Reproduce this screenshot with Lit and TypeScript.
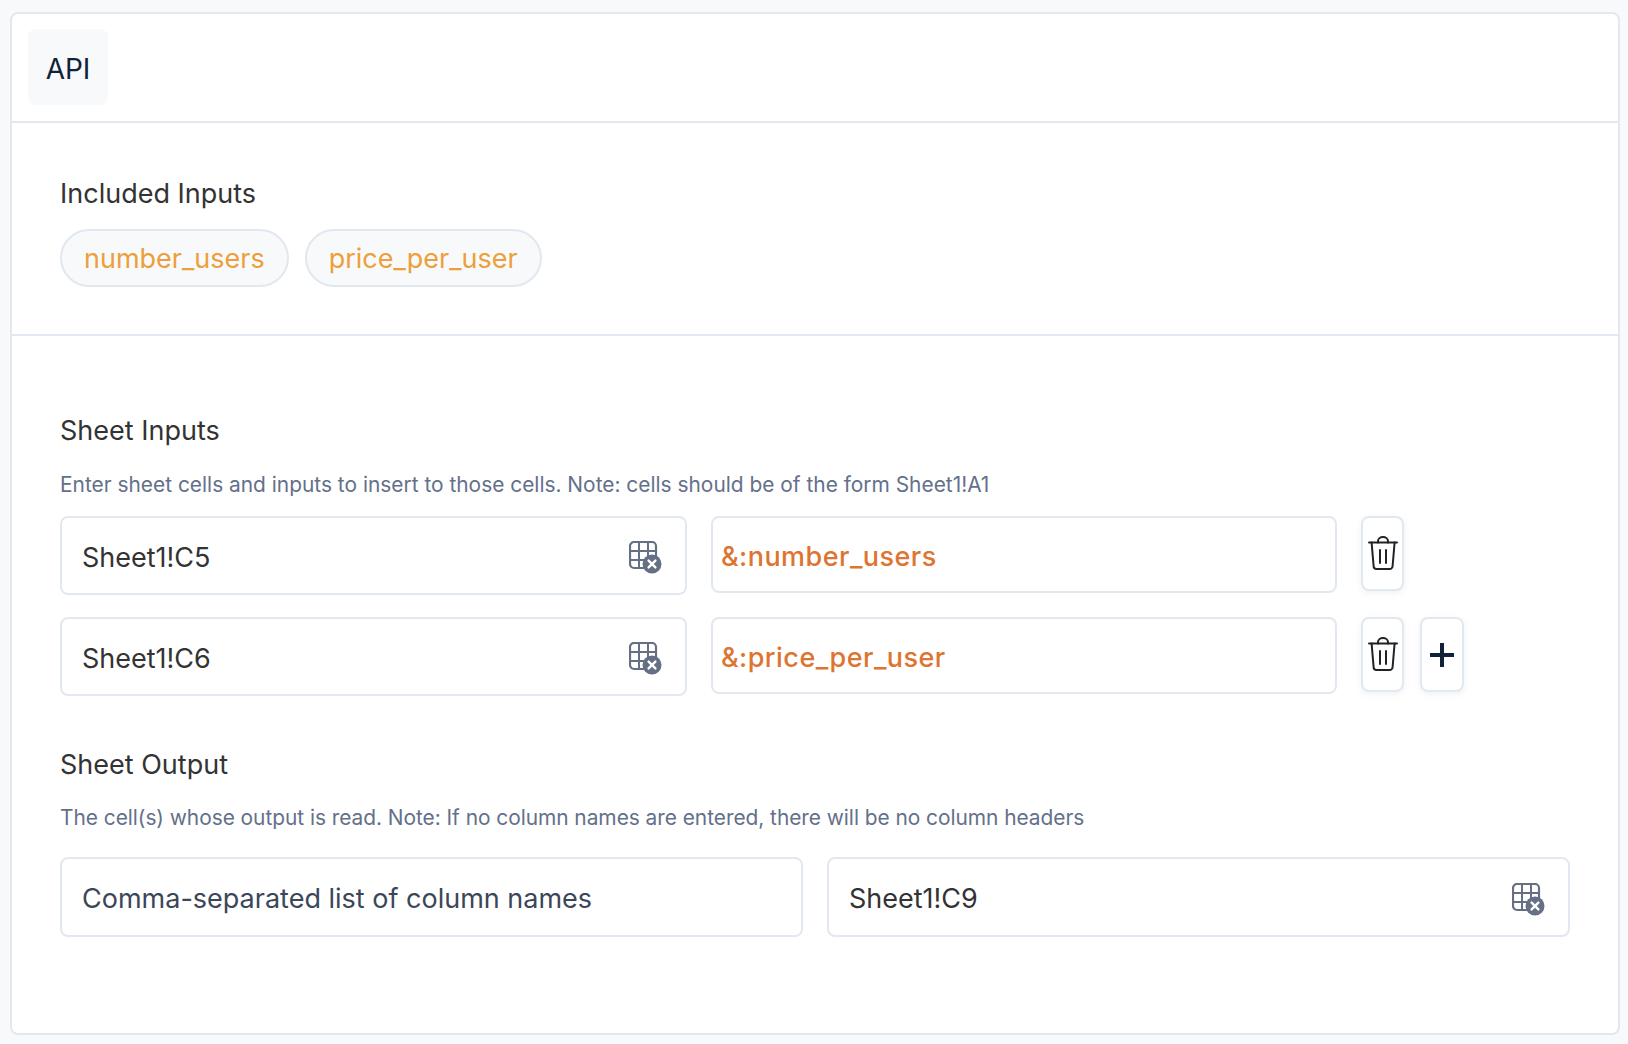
import { LitElement, html, css } from "lit";
import { customElement } from "lit/decorators.js";

const tableIcon = html`<svg class="tbl" width="33" height="33" viewBox="0 0 33 33" fill="none">
  <rect x="1" y="1" width="26" height="26" rx="4" stroke="#667085" stroke-width="2.2"/>
  <path d="M1 10h26M1 19h26M10 1v26M19 1v26" stroke="#667085" stroke-width="2"/>
  <circle cx="23" cy="23" r="9.5" fill="#667085"/>
  <path d="M19.6 19.6l6.8 6.8M26.4 19.6l-6.8 6.8" stroke="#fff" stroke-width="2.4" stroke-linecap="round"/>
</svg>`;

const trash = html`<svg class="bin" width="30" height="34" viewBox="0 0 30 34" fill="none" stroke="#222" stroke-width="2" stroke-linecap="round" stroke-linejoin="round">
  <path d="M1 6.5h28"/>
  <path d="M3.6 6.5l2 23.5a3 3 0 0 0 3 3h13a3 3 0 0 0 3-3l2-23.5"/>
  <path d="M10 6.5V5a5 4 0 0 1 10 0v1.5"/>
  <path d="M12 14v13M18 14v13"/>
</svg>`;

const plus = html`<svg width="24" height="24" viewBox="0 0 24 24" fill="none" stroke="#0f2239" stroke-width="4"><path d="M12 0v24M0 12h24"/></svg>`;

@customElement("app-root")
export class AppRoot extends LitElement {
  static styles = css`
    :host {
      display: block;
      box-sizing: border-box;
      min-height: 100vh;
      padding: 12px 8px 10px 10px;
      background: #f7f9fb;
      font-family: "Inter", "Liberation Sans", sans-serif;
      color: #333;
    }
    * { box-sizing: border-box; }
    .card {
      background: #fff;
      border: 2px solid #e2e8f0;
      border-radius: 8px;
      height: 1023px;
    }
    .tabs {
      padding: 15px 16px 16px;
      border-bottom: 2px solid #e2e8f0;
    }
    .tab {
      width: 80px;
      height: 76px;
      background: #f7f9fb;
      border-radius: 8px;
      display: flex;
      align-items: center;
      justify-content: center;
      font-size: 28px;
      color: #0f2239;
      padding-top: 4px;
    }
    .included {
      height: 213px;
      padding: 55px 47px 0 48px;
      border-bottom: 2px solid #e2e8f0;
    }
    .label { font-size: 27px; line-height: 32px; color: #333; }
    .chips { display: flex; gap: 16px; margin-top: 19px; }
    .chip {
      height: 58px;
      padding: 0 22px;
      border-radius: 29px;
      border: 2px solid #e2e8f0;
      background: #f7f9fb;
      color: #ed9f3a;
      font-size: 27px;
      display: flex;
      align-items: center;
    }
    .sheet { padding: 79px 47px 0 48px; }
    .hint { font-size: 20.9px; line-height: 28px; color: #64708a; margin-top: 24px; }
    .hint.tight { letter-spacing: -0.04px; margin-top: 23px; }
    .rows { display: flex; flex-direction: column; gap: 22px; margin-top: 17px; }
    .row { display: flex; align-items: flex-start; }
    .field {
      height: 79px;
      border: 2px solid #e2e8f0;
      border-radius: 8px;
      display: flex;
      align-items: center;
      justify-content: space-between;
      padding: 3px 24px 0 20px;
      font-size: 27px;
      color: #333;
      background: #fff;
    }
    .cell { width: 627px; }
    .token {
      width: 626px;
      height: 77px;
      margin-left: 24px;
      padding: 3px 8px 0;
      color: #dd7530;
      font-weight: 500;
      letter-spacing: 0.45px;
    }
    .btn {
      width: 43px;
      height: 75px;
      margin-left: 24px;
      border: 2px solid #e2e8f0;
      border-radius: 8px;
      background: #fff;
      display: flex;
      align-items: center;
      justify-content: center;
      box-shadow: 0 2px 6px rgba(100, 116, 139, 0.1);
    }
    .btn.add { width: 44px; margin-left: 16px; }
    .out-label { margin-top: 53px; }
    .outs { display: grid; grid-template-columns: 743px 743px; gap: 24px; margin-top: 25px; }
    .outs .field { height: 80px; }
    .placeholder { color: #3b4759; }
    svg { display: block; flex: none; }
    .tbl { margin: 1px -1px 0 0; }
    .bin { margin-bottom: 2px; }
  `;

  render() {
    const rows = [
      ["Sheet1!C5", "&:number_users", false],
      ["Sheet1!C6", "&:price_per_user", true],
    ] as const;
    return html`<div class="card">
      <div class="tabs"><div class="tab">API</div></div>
      <div class="included">
        <div class="label">Included Inputs</div>
        <div class="chips">
          <div class="chip">number_users</div>
          <div class="chip">price_per_user</div>
        </div>
      </div>
      <div class="sheet">
        <div class="label">Sheet Inputs</div>
        <div class="hint">Enter sheet cells and inputs to insert to those cells. Note: cells should be of the form Sheet1!A1</div>
        <div class="rows">
          ${rows.map(
            ([c, t, add]) => html`<div class="row">
              <div class="field cell"><span>${c}</span>${tableIcon}</div>
              <div class="field token">${t}</div>
              <div class="btn">${trash}</div>
              ${add ? html`<div class="btn add">${plus}</div>` : ""}
            </div>`
          )}
        </div>
        <div class="label out-label">Sheet Output</div>
        <div class="hint tight">The cell(s) whose output is read. Note: If no column names are entered, there will be no column headers</div>
        <div class="outs">
          <div class="field placeholder">Comma-separated list of column names</div>
          <div class="field"><span>Sheet1!C9</span>${tableIcon}</div>
        </div>
      </div>
    </div>`;
  }
}
